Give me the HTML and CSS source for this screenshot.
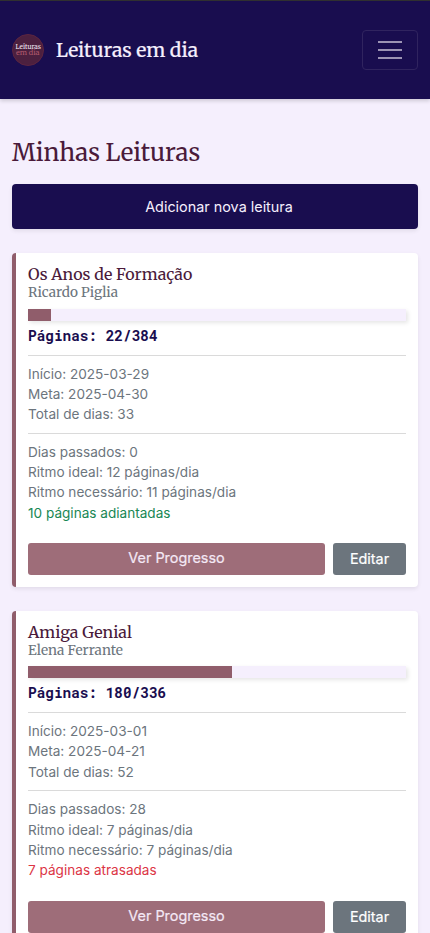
FILE: index.html
```html
<!DOCTYPE html>
<html lang="pt-BR">
<head>
<meta charset="utf-8">
<meta name="viewport" content="width=device-width, initial-scale=1">
<title>Leituras em dia</title>
<link rel="stylesheet" href="styles.css">
</head>
<body>
<header class="navbar">
  <a class="brand">
    <svg class="logo" viewBox="0 0 32 32" width="32" height="32" role="img">
      <circle cx="16" cy="16" r="15.5" fill="#4c203f" stroke="#5c2541" stroke-width="1"/>
      <text class="logo-text" x="3.5" y="15.2" textLength="25.5" lengthAdjust="spacingAndGlyphs">Leituras</text>
      <text class="logo-text logo-bottom" x="4" y="21.4" textLength="23.5" lengthAdjust="spacingAndGlyphs">em dia</text>
    </svg>
    <span class="brand-name">Leituras em dia</span>
  </a>
  <button class="toggler" aria-label="Menu">
    <svg width="30" height="30" viewBox="0 0 30 30"><path d="M3 7h24M3 15h24M3 23h24" stroke="#9c93b3" stroke-width="2" stroke-miterlimit="10"/></svg>
  </button>
</header>
<main class="content">
  <h1 class="page-title">Minhas Leituras</h1>
  <button class="add">Adicionar nova leitura</button>
  <article class="card">
    <h2 class="title">Os Anos de Formação</h2>
    <h3 class="author">Ricardo Piglia</h3>
    <div class="progress"><div class="bar" style="width:6%"></div></div>
    <p class="pages">Páginas: 22/384</p>
    <div class="details">
      <p>Início: 2025-03-29</p>
      <p>Meta: 2025-04-30</p>
      <p>Total de dias: 33</p>
    </div>
    <div class="details">
      <p>Dias passados: 0</p>
      <p>Ritmo ideal: 12 páginas/dia</p>
      <p>Ritmo necessário: 11 páginas/dia</p>
      <p class="ahead">10 páginas adiantadas</p>
    </div>
    <div class="actions"><button class="btn view">Ver Progresso</button><button class="btn edit">Editar</button></div>
  </article>
  <article class="card">
    <h2 class="title">Amiga Genial</h2>
    <h3 class="author">Elena Ferrante</h3>
    <div class="progress"><div class="bar" style="width:54%"></div></div>
    <p class="pages">Páginas: 180/336</p>
    <div class="details">
      <p>Início: 2025-03-01</p>
      <p>Meta: 2025-04-21</p>
      <p>Total de dias: 52</p>
    </div>
    <div class="details">
      <p>Dias passados: 28</p>
      <p>Ritmo ideal: 7 páginas/dia</p>
      <p>Ritmo necessário: 7 páginas/dia</p>
      <p class="behind">7 páginas atrasadas</p>
    </div>
    <div class="actions"><button class="btn view">Ver Progresso</button><button class="btn edit">Editar</button></div>
  </article>
</main>
</body>
</html>
```
FILE: styles.css
```css
* { box-sizing: border-box; }
html { overflow: hidden; }
body {
  margin: 0;
  height: 933px;
  overflow: hidden;
  background: #f5effd;
  font-family: Inter, sans-serif;
  color: #190d4f;
}
h1, h2, h3, p { margin: 0; font-weight: 400; }
button { font-family: inherit; border: 0; padding: 0; }

.navbar {
  height: 99px;
  padding: 0 12px;
  border-top: 1px solid #303030;
  background: #190d4f;
  display: flex;
  align-items: center;
  justify-content: space-between;
  box-shadow: 0 2px 4px rgba(0, 0, 0, .16);
}
.brand { display: flex; align-items: center; gap: 12px; }
.logo { display: block; }
.logo-text { font: 6px Merriweather, "DejaVu Serif", serif; fill: #f0e6f2; }
.logo-bottom { fill: #b0596c; }
.brand-name, .page-title, .title, .author {
  font-family: Merriweather, "DejaVu Serif Condensed", "DejaVu Serif", serif;
}
.brand-name { font-size: 19.2px; line-height: 30px; color: #f5effd; -webkit-text-stroke: .2px #f5effd; }
.toggler {
  width: 56px;
  height: 40px;
  display: flex;
  align-items: center;
  justify-content: center;
  background: none;
  border: 1px solid #30245f;
  border-radius: 4px;
}
.toggler svg { fill: none; }

.content { padding: 40px 12px 0; }
.page-title { height: 45px; font-size: 24px; line-height: 28.8px; color: #4a1a3a; }
.add {
  display: block;
  width: 100%;
  height: 45px;
  margin-bottom: 24px;
  padding-left: 8px;
  border-radius: 4px;
  background: #190d4f;
  color: #f5effd;
  font-size: 14.4px;
  box-shadow: 0 2px 4px rgba(0, 0, 0, .08);
}

.card {
  height: 333.6px;
  margin-bottom: 24px;
  padding: 12px;
  background: #fff;
  border-left: 4px solid #905d6b;
  border-radius: 4px;
  box-shadow: 0 2px 4px rgba(0, 0, 0, .08);
}
.title { font-size: 16px; line-height: 19.2px; color: #4a1a3a; }
.author { margin-bottom: 7.5px; font-size: 13.6px; line-height: 17px; color: #6c757d; }
.progress {
  height: 12px;
  background: #f5effd;
  box-shadow: 2px 2px 4px rgba(0, 0, 0, .1);
}
.bar { height: 100%; background: #905d6b; }
.pages {
  margin-top: 4px;
  padding-bottom: 8.25px;
  font: 700 14.4px/21.6px "Roboto Mono", "DejaVu Sans Mono", monospace;
}
.details {
  padding: 8px 0;
  border-top: 1px solid #dadada;
  font-size: 13.6px;
  line-height: 20.35px;
  color: #6c757d;
}
.ahead { color: #198754; }
.behind { color: #dc3545; }
.actions { display: flex; gap: 8px; margin-top: 12.1px; }
.btn { height: 32px; border-radius: 3px; font-size: 14.4px; -webkit-text-stroke: .2px currentColor; }
.view { flex: 1; padding-bottom: 2.4px; background: #9e6d79; color: #f4e8f5; }
.edit { width: 73px; padding-bottom: .4px; background: #6c757d; color: #fff; }
```
